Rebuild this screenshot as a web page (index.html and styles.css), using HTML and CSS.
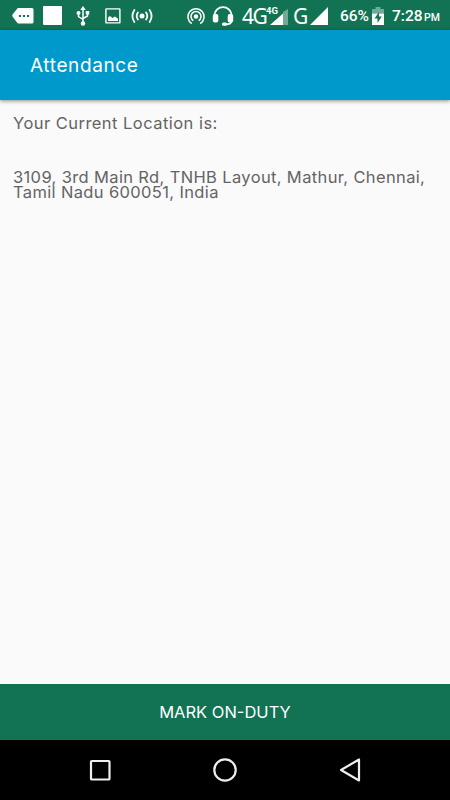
FILE: index.html
```html
<!DOCTYPE html>
<html lang="en">
<head>
<meta charset="UTF-8">
<meta name="viewport" content="width=device-width, initial-scale=1.0">
<title>Attendance</title>
<link rel="stylesheet" href="styles.css">
</head>
<body>

<div class="screen">

  <!-- Status bar -->
  <div class="status">
    <div class="status-left">
      <svg class="tag" width="22" height="16" viewBox="0 0 22 16"><path fill="#fff" d="M6.500 0H20q1.500 0 1.500 1.500v12.500q0 1.500-1.500 1.500H6.500Q5.500 15.500 5 14.500L.5 8.500Q0 7.500.5 6.500L5 1Q5.500 0 6.500 0z"/><path fill="#117353" d="M7 7h2v2H7zm4 0h2v2h-2zm4 0h2v2h-2z"/></svg>
      <div class="block"></div>
      <svg class="usb" width="14" height="20" viewBox="0 0 14 20"><g fill="none" stroke="#fff" stroke-width="1.500"><path d="M7 3v14M2.500 7.500v3L7 13.500M11.500 7v3L7 12.500"/></g><g fill="#fff"><path d="M7 0l2.800 4H4.200zM9.700 5h3.600v3.500H9.700z"/><circle cx="2.500" cy="7" r="2"/><circle cx="7" cy="17.500" r="2.200"/></g></svg>
      <svg class="photo" width="16" height="16" viewBox="0 0 16 16"><rect x=".9" y=".9" width="14" height="14" rx=".5" fill="none" stroke="#fff" stroke-width="1.400"/><path fill="#fff" d="M3 13V9.500l2-1.500 2.500 2L10 8.500l3 2.300V13z"/></svg>
      <svg class="radio" width="22" height="18" viewBox="0 0 22 18"><circle cx="11" cy="9" r="2.500" fill="#fff"/><g fill="none" stroke="#fff" stroke-width="1.800" stroke-linecap="round"><path d="M6.900 5.500q-2.400 3.500 0 7M15.100 5.500q2.400 3.500 0 7M3.400 3q-4 6 0 12M18.600 3q4 6 0 12"/></g></svg>
    </div>
    <div class="status-right">
      <svg class="hotspot" width="18" height="18" viewBox="0 0 18 18"><circle cx="9" cy="9.500" r="2.300" fill="#fff"/><g fill="none" stroke="#fff" stroke-width="1.500"><path d="M6.300 13.700a5 5 0 1 1 5.400 0M4.800 16.600a8 8 0 1 1 8.400 0"/></g></svg>
      <svg class="headset" width="22" height="20" viewBox="0 0 22 20"><g fill="none" stroke="#fff" stroke-width="1.800"><path d="M2.500 10C2.500-1.800 19.500-1.800 19.500 10M19.500 13v2q0 3.300-6 3.300"/></g><g fill="#fff"><rect x=".8" y="8" width="5.500" height="8.500" rx="2"/><rect x="15.700" y="8" width="5.500" height="8.500" rx="2"/><rect x="10" y="16.500" width="5" height="3.200" rx="1.500"/></g></svg>
      <span class="net">4G</span>
      <div class="cell">
        <svg width="18" height="16" viewBox="0 0 18 16"><path fill="#fff" opacity=".4" d="M13 3L18 0v16h-5z"/><path fill="#fff" d="M0 16L13 4.500V16z"/></svg>
        <span class="cell-label">4G</span>
      </div>
      <span class="net net-g">G</span>
      <svg class="signal" width="18" height="18" viewBox="0 0 18 18"><path fill="#fff" d="M0 18L18 0v18z"/></svg>
      <span class="percent">66%</span>
      <svg class="battery" width="12" height="18" viewBox="0 0 12 18"><path fill="#fff" opacity=".4" d="M3.500 0h5v2H12v4.500H0V2h3.500z"/><path fill="#fff" d="M0 6.500h12V18H0z"/><path fill="#117353" d="M7 5L2.500 11.500H5.500V16L9.800 9.500H7z"/></svg>
      <span class="clock">7:28</span><span class="ampm">PM</span>
    </div>
  </div>

  <!-- Title bar -->
  <header class="toolbar">
    <h1>Attendance</h1>
  </header>

  <main class="content">
    <p class="caption">Your Current Location is:</p>
    <p class="address">3109, 3rd Main Rd, TNHB Layout, Mathur, Chennai,<br>Tamil Nadu 600051, India</p>
  </main>

  <button class="mark">MARK ON-DUTY</button>

  <!-- Navigation keys -->
  <nav class="keys">
    <svg width="26" height="26" viewBox="0 0 26 26"><rect x="4" y="4" width="18.500" height="18.500" rx=".8"/></svg>
    <svg width="26" height="26" viewBox="0 0 26 26"><circle cx="13" cy="13" r="10.700"/></svg>
    <svg width="26" height="26" viewBox="0 0 26 26"><path d="M22 2.500v21L4 13z"/></svg>
  </nav>

</div>

</body>
</html>
```

FILE: styles.css
```css
:root{
  --green : #117353;
  --blue  : #0099cc;
  --page  : #fafafa;
  --text  : #646464;
}

*{box-sizing:border-box;}

body{
  margin:0;
  font-family:Inter,"Liberation Sans",sans-serif;
  background:var(--page);
}

.screen{
  width:450px;
  height:800px;
  display:flex;
  flex-direction:column;
  overflow:hidden;
}

/* Status bar */
.status{
  height:30px;
  flex:none;
  display:flex;
  justify-content:space-between;
  align-items:center;
  padding:1px 9px 0 12px;
  background:var(--green);
  color:#fff;
  font-family:Roboto,sans-serif;
}
.status-left,
.status-right{
  display:flex;
  align-items:center;
  height:29px;
  white-space:nowrap;
}
.status svg{display:block;flex:none;}
.block{
  width:19px;
  height:19px;
  margin-left:9px;
  border-radius:1px;
  background:#fff;
}
.usb{margin-left:14px;}
.photo{margin-left:15px;}
.radio{margin-left:10px;}
.headset{margin-left:7px;}
.net{
  width:28px;
  margin-left:8px;
  font-family:"Noto Sans",sans-serif;
  font-size:21px;
  letter-spacing:-1.5px;
}
.cell{
  position:relative;
  height:18px;
  padding-top:2px;
}
.cell-label{
  position:absolute;
  left:-4px;
  top:-2px;
  font-size:9.5px;
  font-weight:700;
  line-height:12px;
}
.net-g{width:17px;margin-left:5px;}
.percent{
  width:30px;
  margin-left:12px;
  font-size:15.5px;
  font-weight:500;
}
.battery{margin-left:2px;}
.clock{
  width:30px;
  margin-left:8px;
  font-size:15.5px;
  font-weight:500;
}
.ampm{
  width:17px;
  margin:3px 0 0 2px;
  font-size:10.5px;
  font-weight:500;
}

/* Title bar */
.toolbar{
  height:70px;
  flex:none;
  display:flex;
  align-items:center;
  padding-left:30px;
  background:var(--blue);
  box-shadow:0 1px 4px rgba(0,0,0,.45);
}
.toolbar h1{
  margin:0;
  font-size:19px;
  font-weight:400;
  letter-spacing:.62px;
  color:#fff;
}

.content{
  flex:1;
  padding:14px 13px 0;
  color:var(--text);
  font-size:16.5px;
  font-weight:400;
  letter-spacing:.36px;
  white-space:nowrap;
}
.content p{margin:0;}
.caption{
  line-height:18px;
  letter-spacing:.46px;
}
.address{
  padding-top:38px;
  line-height:15px;
}

.mark{
  height:56px;
  flex:none;
  padding:0;
  border:0;
  background:var(--green);
  color:#fff;
  font-family:inherit;
  font-size:16.5px;
}

/* Navigation keys */
.keys{
  height:60px;
  flex:none;
  display:flex;
  justify-content:center;
  align-items:center;
  gap:99px;
  background:#000;
}
.keys svg{
  fill:none;
  stroke:#eee;
  stroke-width:2.200;
  stroke-linejoin:round;
}
```
